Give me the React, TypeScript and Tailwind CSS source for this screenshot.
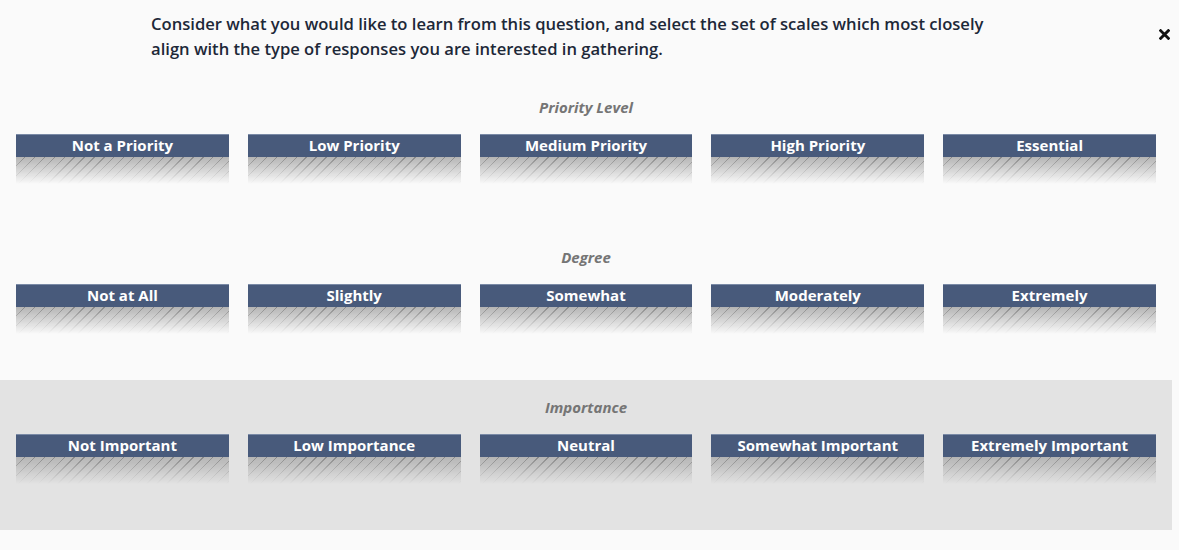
import React from 'react';

type Scale = { label: string; options: string[]; highlighted?: boolean };

const scales: Scale[] = [
  { label: 'Priority Level', options: ['Not a Priority', 'Low Priority', 'Medium Priority', 'High Priority', 'Essential'] },
  { label: 'Degree', options: ['Not at All', 'Slightly', 'Somewhat', 'Moderately', 'Extremely'] },
  {
    label: 'Importance',
    options: ['Not Important', 'Low Importance', 'Neutral', 'Somewhat Important', 'Extremely Important'],
    highlighted: true,
  },
];

const ScaleOption: React.FC<{ text: string }> = ({ text }) => (
  <div className="flex flex-col">
    <div className="h-[23px] bg-[#485a7b] border-t border-[#7a8aa6] flex items-center justify-center pb-[1px] text-white text-[15px] font-bold leading-none">
      {text}
    </div>
    <div className="h-[27px] bg-[repeating-linear-gradient(135deg,transparent_0_6px,rgba(0,0,0,0.25)_6px_7px),linear-gradient(to_bottom,#b4b4b4,#b4b4b4)] [mask-image:linear-gradient(to_bottom,black,transparent)]"></div>
  </div>
);

export default function App() {
  return (
    <div className="relative h-[550px] overflow-hidden bg-[#fafafa] font-['Open_Sans',sans-serif]">
      {/* Close */}
      <button className="absolute left-[1159px] top-[29px] w-[11px] h-[11px]">
        <svg viewBox="0 0 10 10" className="w-full h-full">
          <path d="M1.5 1.5 L8.5 8.5 M8.5 1.5 L1.5 8.5" stroke="#111" strokeWidth="2.6" strokeLinecap="square" />
        </svg>
      </button>

      {/* Intro */}
      <div className="pl-[151px] pt-[11px] h-[80px]">
        <p className="max-w-[860px] text-[16.6px] font-semibold leading-[25px] text-[#1d2838]">
          Consider what you would like to learn from this question, and select the set of scales which most closely align with the type of responses you are interested in gathering.
        </p>
      </div>

      {/* Scales */}
      <div className="w-[1172px]">
        {scales.map((s) => (
          <section key={s.label} className={`h-[150px] px-4 pt-[17px] ${s.highlighted ? 'bg-[#e3e3e3]' : ''}`}>
            <h3 className="text-center text-[15px] leading-[21px] font-bold italic text-[#757575]">{s.label}</h3>
            <div className="mt-4 grid grid-cols-5 gap-[19px]">
              {s.options.map((o) => (
                <ScaleOption key={o} text={o} />
              ))}
            </div>
          </section>
        ))}
        <section className="h-[20px] px-4 pt-[14px]">
          <h3 className="text-center text-[15px] leading-[21px] font-bold italic text-[#757575]">Agreement</h3>
        </section>
      </div>
    </div>
  );
}
